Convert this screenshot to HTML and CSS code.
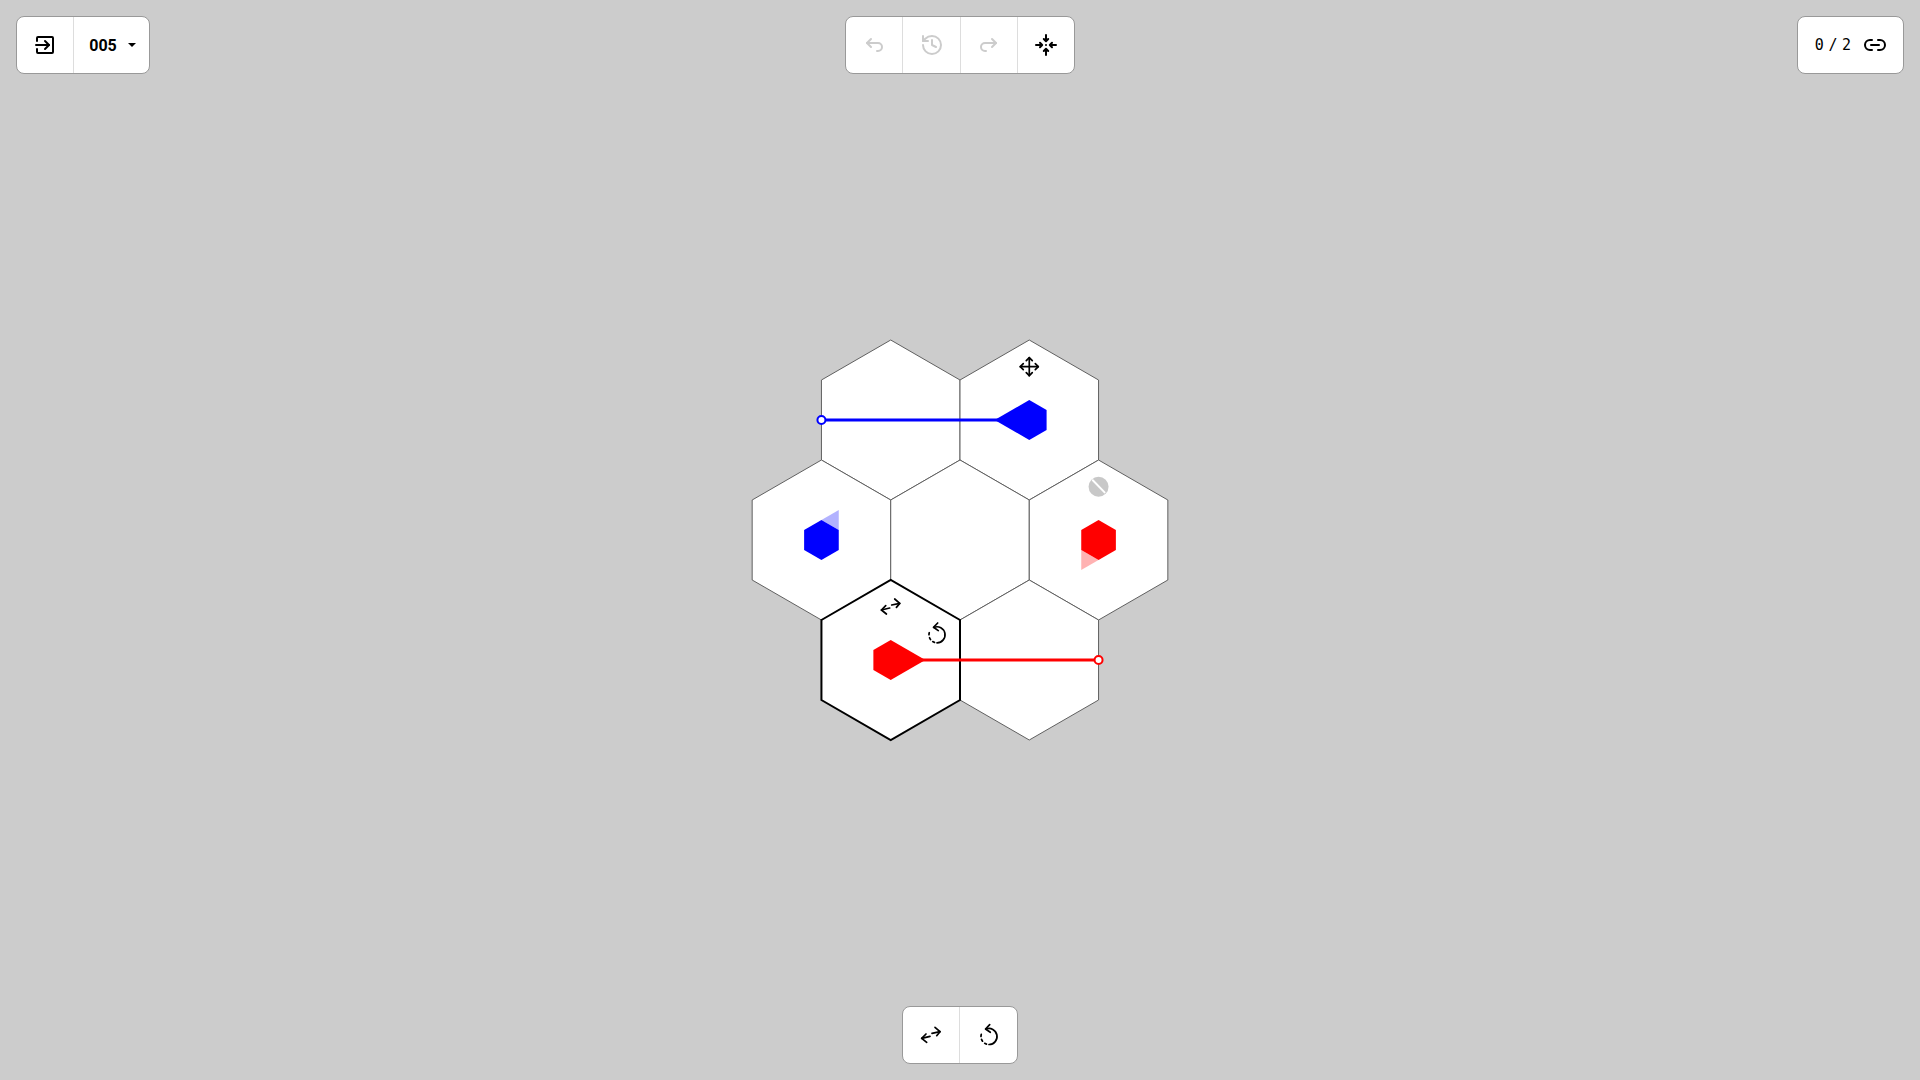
FILE: index.html
```html
<!DOCTYPE html>
<html lang="en">
<head>
<meta charset="utf-8">
<title>Hex puzzle</title>
<link rel="stylesheet" href="styles.css">
</head>
<body>
<svg class="defs" width="0" height="0" aria-hidden="true">
  <defs>
    <g id="i-swap"><path d="M13 10.300L21 8.700"/><path d="M16 4.300l5 4.400-3.300 4"/><path d="M11 13.300L2.700 15.300"/><path d="M7 11l-4.300 4.300 5 4"/></g>
    <g id="i-rotate"><path d="M9 6.100A8 8 0 1 1 12 21.500"/><path class="dashes" d="M9.500 21.100A8 8 0 0 1 5.500 8.800"/><path d="M12.700 1.700L8.500 6l4.800 3.300"/></g>
    <g id="i-move"><path d="M12 3v18M3 12h18"/><path d="M9 6l3-3 3 3M9 18l3 3 3-3M6 9l-3 3 3 3M18 9l3 3-3 3"/></g>
  </defs>
</svg>
<main class="page">
  <header class="top">
    <nav class="panel panel-left">
      <button class="btn" type="button">
        <svg class="icon" viewBox="0 0 24 24"><path d="M4 8V5a1 1 0 0 1 1-1h14a1 1 0 0 1 1 1v14a1 1 0 0 1-1 1H5a1 1 0 0 1-1-1v-3"/><path d="M3 12h13"/><path d="M12 8l4 4-4 4"/></svg>
      </button>
      <button class="btn btn-level" type="button"><span class="level">005</span><span class="caret"></span></button>
    </nav>
    <nav class="panel panel-mid">
      <button class="btn off" type="button"><svg class="icon" viewBox="0 0 24 24"><path d="M9 14l-4-4 4-4"/><path d="M5 10h11a4 4 0 1 1 0 8h-1"/></svg></button>
      <button class="btn off" type="button"><svg class="icon" viewBox="0 0 24 24"><path d="M3 12a9 9 0 1 0 9-9 9.750 9.750 0 0 0-6.740 2.740L3 8"/><path d="M3 3v5h5"/><path d="M12 7v5l4 2"/></svg></button>
      <button class="btn off" type="button"><svg class="icon" viewBox="0 0 24 24"><path d="M15 14l4-4-4-4"/><path d="M19 10H8a4 4 0 1 0 0 8h1"/></svg></button>
      <button class="btn" type="button"><svg class="icon" viewBox="0 0 24 24"><path d="M12 2v6M9.800 6L12 8.200 14.200 6M12 22v-6M9.800 18l2.200-2.200 2.200 2.200M2 12h6M6 9.800L8.200 12 6 14.200M22 12h-6M18 9.800L15.800 12l2.200 2.200"/><circle class="dot" cx="12" cy="12" r="1"/></svg></button>
    </nav>
    <nav class="panel panel-right">
      <div class="score"><span class="count">0 / 2</span>
        <svg class="icon" viewBox="0 0 24 24"><path d="M9 17H7A5 5 0 0 1 7 7h2"/><path d="M15 7h2a5 5 0 1 1 0 10h-2"/><path d="M8 12h8"/></svg>
      </div>
    </nav>
  </header>

  <section class="stage">
    <svg class="board" viewBox="-170 -150 340 300" width="340" height="300">
      <g class="hexes">
        <polygon points="-69.280,-160 0,-200 69.280,-160 69.280,-80 0,-40 -69.280,-80" transform="translate(-69.280 0)"/>
        <polygon points="-69.280,-160 0,-200 69.280,-160 69.280,-80 0,-40 -69.280,-80" transform="translate(69.280 0)"/>
        <polygon points="-69.280,-40 0,-80 69.280,-40 69.280,40 0,80 -69.280,40" transform="translate(-138.560 0)"/>
        <polygon points="-69.280,-40 0,-80 69.280,-40 69.280,40 0,80 -69.280,40"/>
        <polygon points="-69.280,-40 0,-80 69.280,-40 69.280,40 0,80 -69.280,40" transform="translate(138.560 0)"/>
        <polygon points="-69.280,80 0,40 69.280,80 69.280,160 0,200 -69.280,160" transform="translate(69.280 0)"/>
      </g>
      <polygon class="hex-active" points="-69.280,80 0,40 69.280,80 69.280,160 0,200 -69.280,160" transform="translate(-69.280 0)"/>

      <g class="blue">
        <line x1="-138.560" y1="-120" x2="40" y2="-120"/>
        <polygon points="34.640,-120 69.280,-140 86.600,-130 86.600,-110 69.280,-100"/>
        <circle class="end" cx="-138.560" cy="-120" r="4"/>
        <polygon class="ghost" points="-138.560,-20 -121.240,-30 -121.240,-10"/>
        <polygon points="-138.560,-20 -121.240,-10 -121.240,10 -138.560,20 -155.880,10 -155.880,-10"/>
      </g>
      <g class="red">
        <line x1="-40" y1="120" x2="138.560" y2="120"/>
        <polygon points="-34.640,120 -69.280,100 -86.600,110 -86.600,130 -69.280,140"/>
        <circle class="end" cx="138.560" cy="120" r="4"/>
        <polygon class="ghost" points="138.560,20 121.240,30 121.240,10"/>
        <polygon points="138.560,-20 155.880,-10 155.880,10 138.560,20 121.240,10 121.240,-10"/>
      </g>

      <g class="marks">
        <use href="#i-move" transform="translate(57.280 -185.300)"/>
        <use href="#i-swap" transform="translate(-81.280 54.700)"/>
        <use href="#i-rotate" transform="translate(-35 81.300)"/>
      </g>
      <g>
        <circle class="ban" cx="138.560" cy="-53.300" r="10"/>
        <line class="ban-bar" x1="132.800" y1="-59.800" x2="144.600" y2="-47.600"/>
      </g>
    </svg>
  </section>

  <footer class="bottom">
    <nav class="panel panel-mid">
      <button class="btn" type="button"><svg class="icon" viewBox="0 0 24 24"><use href="#i-swap"/></svg></button>
      <button class="btn" type="button"><svg class="icon" viewBox="0 0 24 24"><use href="#i-rotate"/></svg></button>
    </nav>
  </footer>
</main>
</body>
</html>
```

FILE: styles.css
```css
* { box-sizing: border-box; }
html, body { margin: 0; height: 100%; }
body { background: #cccccc; font-family: Roboto, "Liberation Sans", sans-serif; overflow: hidden; }
.defs { position: absolute; }
.page { height: 1080px; padding: 16px; display: grid; grid-template-rows: 58px 1fr 58px; }
.top { display: grid; grid-template-columns: 1fr auto 1fr; align-items: start; }
.panel { display: inline-flex; height: 58px; background: #fff; border: 1px solid #999; border-radius: 8px; overflow: hidden; }
.panel-left { justify-self: start; }
.panel-right { justify-self: end; }
.btn { width: 57px; height: 56px; padding: 0; margin: 0; border: 0; border-left: 1px solid #ddd; background: transparent; color: #000; display: flex; align-items: center; justify-content: center; font: inherit; }
.btn:first-child { border-left: 0; width: 56px; }
.panel-mid .btn:nth-child(2) { width: 58px; }
.btn-level { width: 76px; gap: 11px; padding-left: 2px; }
.level { font-size: 16px; font-weight: 700; color: #000; }
.caret { width: 0; height: 0; border-left: 4px solid transparent; border-right: 4px solid transparent; border-top: 4px solid #000; }
.icon { width: 24px; height: 24px; fill: none; stroke: #000; stroke-width: 2; stroke-linecap: round; stroke-linejoin: round; }
.off .icon { stroke: #ccc; }
.dot { fill: #000; stroke: none; }
.score { display: flex; align-items: center; gap: 12px; padding: 0 16px 0 17px; height: 56px; }
.count { font-family: "DejaVu Sans Mono", "Liberation Mono", monospace; font-size: 15px; word-spacing: -4.500px; color: #000; }
.stage { display: flex; align-items: center; justify-content: center; }
.board { overflow: visible; display: block; }
.hexes polygon { fill: #fff; stroke: #606060; stroke-width: 1; }
.hex-active { fill: #fff; stroke: #000; stroke-width: 2; }
.blue polygon { fill: #0000ff; stroke: none; }
.blue line { stroke: #0000ff; stroke-width: 3; }
.red polygon { fill: #ff0000; stroke: none; }
.red line { stroke: #ff0000; stroke-width: 3; }
.blue .ghost, .red .ghost { opacity: .3; }
.end { fill: #fff; stroke-width: 2; }
.blue .end { stroke: #0000ff; }
.red .end { stroke: #ff0000; }
defs g { fill: none; stroke: #000; stroke-width: 1.700; stroke-linecap: round; stroke-linejoin: round; }
.dashes { stroke-dasharray: 2 3; }
.ban { fill: #c8c8c8; }
.ban-bar { stroke: #fff; stroke-width: 2; stroke-linecap: round; }
.bottom { display: flex; justify-content: center; align-items: end; }
```
